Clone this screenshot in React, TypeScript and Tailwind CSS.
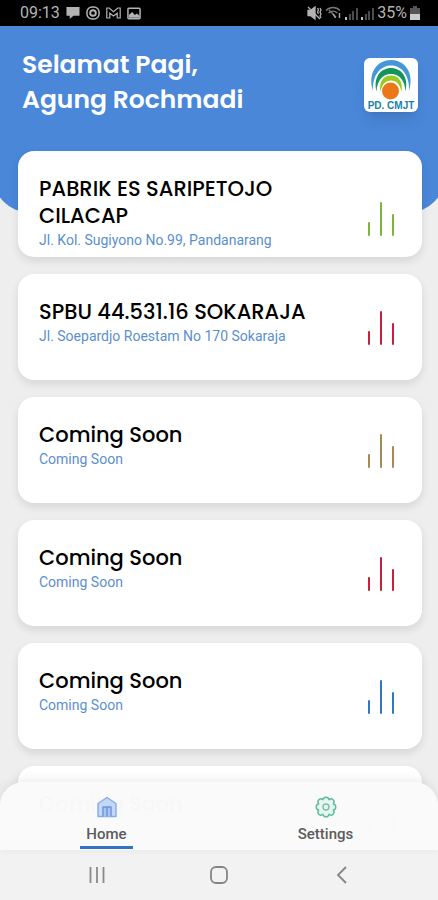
import type { ReactNode } from "react";

type Place = { title: string; subtitle?: string; color: string };

const PLACES: Place[] = [
  { title: "PABRIK ES SARIPETOJO CILACAP", subtitle: "Jl. Kol. Sugiyono No.99, Pandanarang", color: "#7cb342" },
  { title: "SPBU 44.531.16 SOKARAJA", subtitle: "Jl. Soepardjo Roestam No 170 Sokaraja", color: "#c8203c" },
  { title: "Coming Soon", subtitle: "Coming Soon", color: "#a58a58" },
  { title: "Coming Soon", subtitle: "Coming Soon", color: "#c8203c" },
  { title: "Coming Soon", subtitle: "Coming Soon", color: "#3474c4" },
  { title: "Coming Soon", color: "#7cb342" },
];

function StatusBar() {
  return (
    <div className="flex h-[26px] shrink-0 items-center justify-between bg-black pr-[18px] pl-5 font-[Roboto,sans-serif] text-base text-[#b4b4b4]">
      <div className="flex items-center gap-[6px]">
        <span>09:13</span>
        <svg width="14" height="14" viewBox="0 0 15 14" fill="currentColor">
          <path d="M0.5 0.5h14V10H8l-4 3.500V10H.5z" />
        </svg>
        <svg width="14" height="14" viewBox="0 0 15 15" fill="none" stroke="currentColor" strokeWidth="1.6">
          <rect x="1" y="1" width="13" height="13" rx="5.500" />
          <circle cx="7.500" cy="7.500" r="3" strokeWidth="2" />
        </svg>
        <svg width="15" height="12" viewBox="0 0 15 12" fill="none" stroke="currentColor" strokeWidth="1.200">
          <path d="M0.800 11V1h2.400l4.300 3.600L11.800 1h2.400v10h-3V6.200L7.500 9 3.800 6.200V11z" />
        </svg>
        <svg width="14" height="13" viewBox="0 0 15 13" fill="none" stroke="currentColor" strokeWidth="1.600">
          <rect x="1" y="1" width="13" height="11" rx="1" />
          <path d="M2 11l0-3 3.500-3 3 3 2-1.500 3 2.500v2z" fill="currentColor" stroke="none" />
        </svg>
      </div>
      <div className="flex items-center gap-[3px]">
        <svg width="15" height="14" viewBox="0 0 15 14" fill="none" stroke="currentColor" strokeWidth="1.300">
          <path d="M1 4.500h2.500L8 1v12L3.500 9.500H1z" fill="currentColor" />
          <path d="M1 1l12 12M10.500 2l1 2-1 2 1 2M13 2l1 2-1 2 1 2-1 2 1 2" />
        </svg>
        <svg width="17" height="14" viewBox="0 0 17 14" fill="none" stroke="#777" strokeWidth="1.400">
          <path d="M1 4.500c4-4 10-4 14 0M3.500 7c3-2.500 6-2.500 9 0M4 4l7 7" />
          <path d="M8 8l2.500 4M14.500 7v5" stroke="#aaa" />
        </svg>
        <SignalIcon />
        <SignalIcon />
        <span>35%</span>
        <svg width="10" height="14" viewBox="0 0 10 14">
          <path d="M3 0h4v2h3v6H0V2h3z" fill="#555" />
          <path d="M0 8h10v6H0z" fill="#ccc" />
        </svg>
      </div>
    </div>
  );
}

function SignalIcon() {
  return (
    <svg width="13" height="13" viewBox="0 0 13 13" fill="#4c4c4c">
      <rect y="10" width="2" height="3" fill="#bbb" />
      <rect x="4" y="7" width="2" height="6" />
      <rect x="7" y="4" width="2" height="9" />
      <rect x="11" y="1" width="2" height="12" />
    </svg>
  );
}

function CompanyLogo() {
  return (
    <div className="h-[54px] w-[54px] rounded-md bg-white shadow-lg">
      <svg viewBox="0 0 54 54" role="img" aria-label="PD. CMJT">
        <path d="M9 33C3 14 14 2 27 2s24 12 18 31C46 18 38 7.500 27 7.500S8 18 9 33z" fill="#4598d8" />
        <path d="M12.500 33.500C9 19 17 10 27 10s18 9 14.500 23.500C41 22 35 16 27 16s-14 6-14.500 17.500z" fill="#12965a" />
        <path d="M16.500 34C14.500 23 20 17.500 27 17.500S39.500 23 37.500 34C36 26 32 22.500 27 22.500S18 26 16.500 34z" fill="#9aca20" />
        <circle cx="26.500" cy="33" r="8.500" fill="#ea7818" />
        <text
          x="27"
          y="51"
          textAnchor="middle"
          fill="#1a7fa8"
          className="font-[Liberation_Sans,sans-serif] text-[10px] font-bold"
        >
          PD. CMJT
        </text>
      </svg>
    </div>
  );
}

function BarsIcon({ color }: { color: string }) {
  return (
    <svg width="28" height="34" viewBox="0 0 28 34" stroke={color} strokeWidth="2" strokeLinecap="round">
      <path d="M2 21v12M14 1v32M26 13v20" />
    </svg>
  );
}

function PlaceCard({ place }: { place: Place }) {
  return (
    <button className="flex h-[106px] w-full shrink-0 items-start rounded-2xl bg-white pt-6 pr-[27px] pl-[21px] text-left shadow-[0_4px_8px_rgba(0,0,0,0.1)]">
      <span className="flex w-full items-center justify-between">
        <span className="min-h-12 max-w-[280px]">
          <span className="block font-[Poppins,Inter,sans-serif] text-[21px] leading-[27px] font-medium text-black">
            {place.title}
          </span>
          {place.subtitle && (
            <span className="mt-px block font-[Roboto,sans-serif] text-sm leading-5 text-[#5a8fd0]">
              {place.subtitle}
            </span>
          )}
        </span>
        <span className="pt-3">
          <BarsIcon color={place.color} />
        </span>
      </span>
    </button>
  );
}

function HomeIcon() {
  return (
    <svg width="22" height="22" viewBox="0 0 22 22" fill="#c3d8f8" stroke="#86abe6" strokeWidth="1.400" strokeLinejoin="round">
      <path d="M2 7.500L11 1.500l9 6v13H2z" />
      <path d="M7 20.500V11h8v9.500M11 11v9.500" fill="#a9c5f3" stroke="#6c94da" />
    </svg>
  );
}

function GearIcon() {
  return (
    <svg width="22" height="22" viewBox="-11 -11 22 22" fill="#e6f6f0" stroke="#5cbc9d" strokeWidth="1.400" strokeLinejoin="round">
      <path d="M-3-7.300A3.050 3.050 0 0 1 3-7.300A3.050 3.050 0 0 1 7.300-3A3.050 3.050 0 0 1 7.300 3A3.050 3.050 0 0 1 3 7.300A3.050 3.050 0 0 1-3 7.300A3.050 3.050 0 0 1-7.300 3A3.050 3.050 0 0 1-7.300-3A3.050 3.050 0 0 1-3-7.300z" />
      <circle r="3" stroke="#7fbfa8" />
    </svg>
  );
}

function Tab({ icon, label, active = false }: { icon: ReactNode; label: string; active?: boolean }) {
  return (
    <a href="#" className="flex flex-col items-center pt-[14px]">
      {icon}
      <span className="mt-[6px] font-[Roboto,sans-serif] text-[15px] leading-5 font-medium text-[#5c5c5c]">{label}</span>
      {active && <span className="mt-[2px] h-[3px] w-[53px] bg-[#3474c4]" />}
    </a>
  );
}

function SystemNav() {
  return (
    <div className="flex h-[50px] shrink-0 items-center justify-between bg-[#f2f2f2] px-[85px]">
      <button aria-label="Recent apps">
        <svg width="24" height="20" viewBox="0 0 24 20" stroke="#8a8a8a" strokeWidth="1.800">
          <path d="M5.500 2v16M12 2v16M18.500 2v16" />
        </svg>
      </button>
      <button aria-label="Home screen">
        <svg width="24" height="20" viewBox="0 0 24 20" fill="none" stroke="#858585" strokeWidth="1.800">
          <rect x="4" y="2" width="16" height="16" rx="5" />
        </svg>
      </button>
      <button aria-label="Back">
        <svg width="24" height="20" viewBox="0 0 24 20" fill="none" stroke="#858585" strokeWidth="1.800">
          <path d="M17 2L9 10l8 8" />
        </svg>
      </button>
    </div>
  );
}

export default function App() {
  return (
    <div className="flex h-screen flex-col overflow-hidden bg-[#eeeeee]">
      <StatusBar />

      <main className="min-h-0 flex-1 overflow-hidden">
        <header className="-mx-[6px] flex h-[186px] items-start justify-between rounded-b-[34px] bg-[#4a87d9] pr-[26px] pl-7">
          <h1 className="pt-[21px] font-[Poppins,Inter,sans-serif] text-[25px] leading-[35px] font-semibold text-white">
            Selamat Pagi,
            <br />
            Agung Rochmadi
          </h1>
          <div className="pt-8">
            <CompanyLogo />
          </div>
        </header>

        <div className="-mt-[61px] flex flex-col gap-[17px] pr-4 pl-[18px]">
          {PLACES.map((p, i) => (
            <PlaceCard key={i} place={p} />
          ))}
        </div>
      </main>

      {/* sits over the end of the list, slightly see-through */}
      <nav className="relative -mt-[68px] h-[68px] shrink-0 rounded-t-[24px] bg-[#fafafa]/99 shadow-[0_-2px_12px_rgba(0,0,0,0.08)]">
        <div className="mr-[3px] -ml-[3px] grid grid-cols-2">
          <Tab icon={<HomeIcon />} label="Home" active />
          <Tab icon={<GearIcon />} label="Settings" />
        </div>
      </nav>
      <SystemNav />
    </div>
  );
}
